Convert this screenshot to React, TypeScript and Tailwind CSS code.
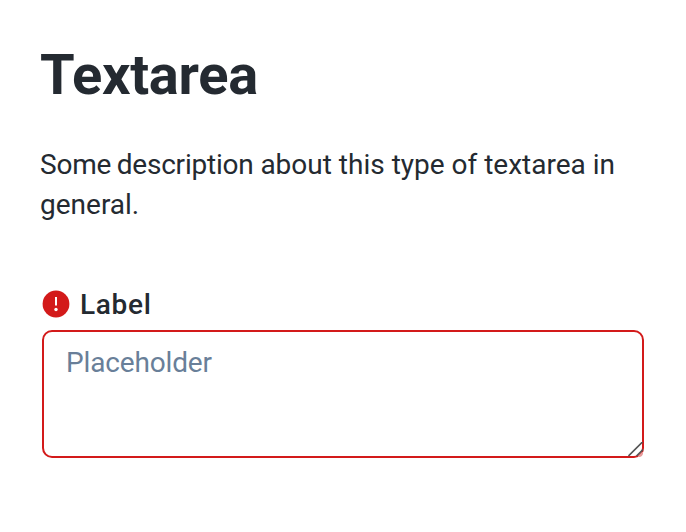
export default function App() {
  return (
    <main className="h-[532px] w-[686px] bg-white pl-10 pr-[42px] pt-10 font-[Roboto,sans-serif] text-[#242a31]">
      <h1 className="text-[56px] leading-[70px] font-bold tracking-[-0.25px]">Textarea</h1>
      <p className="mt-[35px] text-[28px] leading-10">
        <span className="tracking-[-0.23px] [word-spacing:-1px]">Some description</span>{' '}
        <span>about this type of textarea in</span>{' '}
        <span>general.</span>
      </p>
      <div className="mt-[59px] flex h-10 items-center gap-2.5 pl-0.5">
        <svg className="size-7" viewBox="0 0 28 28">
          <circle cx="14" cy="14" r="13.4" fill="#d31a1a" />
          <path d="M14 7v8.6" stroke="white" strokeWidth="2" />
          <circle cx="14" cy="19.5" r="1.7" fill="white" />
        </svg>
        <label htmlFor="field" className="pt-0.5 text-[28px] leading-10 font-medium tracking-[0.7px]">Label</label>
      </div>
      <div className="relative mt-1.5 ml-0.5 h-32 w-[602px]">
        <textarea
          id="field"
          placeholder="Placeholder"
          className="block h-32 w-[602px] resize-none rounded-[10px] border-2 border-[#d31a1a] px-[22px] pt-[11px] pb-2 text-[28px] leading-10 tracking-[-0.15px] outline-none placeholder:text-[#697f99]"
        />
        <svg className="pointer-events-none absolute right-0 bottom-0 size-4" viewBox="0 0 16 16">
          <path d="M10 14 14 10H15V12Q14 15 12 15H10Z" fill="#e89a9a" />
          <path d="M.5 14 14.5 0M8.5 14 15 7.5" fill="none" stroke="#555" strokeWidth="1.7" />
        </svg>
      </div>
    </main>
  );
}
